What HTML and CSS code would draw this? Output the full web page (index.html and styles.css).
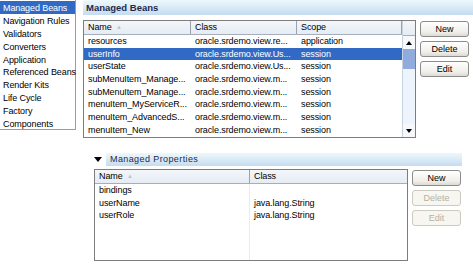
FILE: index.html
```html
<!DOCTYPE html>
<html lang="en">
<head>
    <meta charset="UTF-8">
    <meta name="viewport" content="width=device-width, initial-scale=1.0">
    <title>Managed Beans</title>
    <link rel="stylesheet" href="styles.css">
</head>
<body>
    <div class="top">
        <ul class="nav">
            <li class="selected">Managed Beans</li>
            <li>Navigation Rules</li>
            <li>Validators</li>
            <li>Converters</li>
            <li>Application</li>
            <li>Referenced Beans</li>
            <li>Render Kits</li>
            <li>Life Cycle</li>
            <li>Factory</li>
            <li>Components</li>
        </ul>

        <div class="beans">
            <div class="bar bold">Managed Beans</div>
            <div class="panel">
                <div class="grid beans-grid">
                    <div class="grid-main">
                        <div class="row head">
                            <span>Name <i class="sort">&#9650;</i></span>
                            <span>Class</span>
                            <span>Scope</span>
                        </div>
                        <div class="row"><span>resources</span><span>oracle.srdemo.view.re...</span><span>application</span></div>
                        <div class="row selected"><span>userInfo</span><span>oracle.srdemo.view.Us...</span><span>session</span></div>
                        <div class="row"><span>userState</span><span>oracle.srdemo.view.Us...</span><span>session</span></div>
                        <div class="row"><span>subMenuItem_Manage...</span><span>oracle.srdemo.view.m...</span><span>session</span></div>
                        <div class="row"><span>subMenuItem_Manage...</span><span>oracle.srdemo.view.m...</span><span>session</span></div>
                        <div class="row"><span>menuItem_MyServiceR...</span><span>oracle.srdemo.view.m...</span><span>session</span></div>
                        <div class="row"><span>menuItem_AdvancedS...</span><span>oracle.srdemo.view.m...</span><span>session</span></div>
                        <div class="row"><span>menuItem_New</span><span>oracle.srdemo.view.m...</span><span>session</span></div>
                    </div>
                    <div class="scroll">
                        <div class="scroll-corner"></div>
                        <div class="scroll-btn"><i class="arrow-up"></i></div>
                        <div class="scroll-track">
                            <div class="scroll-thumb"></div>
                        </div>
                        <div class="scroll-btn"><i class="arrow-down"></i></div>
                    </div>
                </div>
                <div class="buttons">
                    <button>New</button>
                    <button>Delete</button>
                    <button>Edit</button>
                </div>
            </div>
        </div>
    </div>

    <div class="props">
        <div class="props-head">
            <i class="toggle"></i>
            <div class="bar">Managed Properties</div>
        </div>
        <div class="panel">
            <div class="grid props-grid">
                <div class="row head">
                    <span>Name <i class="sort">&#9650;</i></span>
                    <span>Class</span>
                </div>
                <div class="row"><span>bindings</span><span></span></div>
                <div class="row"><span>userName</span><span>java.lang.String</span></div>
                <div class="row"><span>userRole</span><span>java.lang.String</span></div>
                <div class="row filler"><span></span><span></span></div>
            </div>
            <div class="buttons">
                <button>New</button>
                <button disabled>Delete</button>
                <button disabled>Edit</button>
            </div>
        </div>
    </div>
</body>
</html>
```

FILE: styles.css
```css
body {
    margin: 0;
    background: #fff;
    font-family: "Liberation Sans", Arial, sans-serif;
    font-size: 9px;
    letter-spacing: -0.1px;
    color: #000;
    width: 473px;
    height: 266px;
    overflow: hidden;
}

.top {
    display: flex;
    align-items: flex-start;
}

/* liste de gauche */
.nav {
    list-style: none;
    margin: 0;
    padding: 1px 0 0;
    width: 75px;
    height: 128px;
    border: 1px solid #9c9c9c;
    border-top: none;
    border-left: none;
}

.nav li {
    height: 12.9px;
    line-height: 14px;
    padding-left: 3px;
    white-space: nowrap;
}

.nav li.selected {
    background: #316ac5;
    color: #fff;
}

.beans {
    flex: 1;
    margin-left: 7px;
}

.bar {
    height: 15px;
    line-height: 15px;
    padding-left: 3px;
    background: linear-gradient(#eef8fc, #c5dcf0);
    color: #1b2b4d;
    white-space: nowrap;
}

.bar.bold {
    font-weight: bold;
    font-size: 9.5px;
    letter-spacing: 0;
}

.panel {
    display: flex;
    align-items: flex-start;
    margin-top: 5px;
}

.grid {
    border: 1px solid #7d7d7d;
    background: #fff;
}

.beans-grid {
    display: flex;
    width: 331px;
    height: 116px;
}

.grid-main {
    flex: 1;
}

.row {
    display: grid;
    height: 12.7px;
    line-height: 12.7px;
    white-space: nowrap;
}

.beans-grid .row {
    grid-template-columns: 107px 106px 1fr;
}

.props-grid .row {
    grid-template-columns: 155px 1fr;
}

.row span {
    padding-left: 4px;
    overflow: hidden;
}

.row.head {
    height: 13px;
    line-height: 13px;
    background: linear-gradient(#f3f6fa, #e6ecf4);
    border-bottom: 1px solid #a6aebb;
}

.row.head span {
    border-right: 1px solid #9ba3b0;
}

.row.head span:last-child {
    border-right: none;
}

.beans-grid .row.head span:last-child {
    border-right: 1px solid #9ba3b0;
}

.row.selected {
    background: #316ac5;
    color: #fff;
}

.sort {
    font-style: normal;
    font-size: 6px;
    color: #c0c4ca;
    vertical-align: 1px;
    margin-left: 2px;
}

/* barre de defilement */
.scroll {
    width: 12px;
    display: flex;
    flex-direction: column;
    background: #eef4fc;
    border-left: 1px solid #c8d3e2;
}

.scroll-corner {
    height: 14px;
    background: linear-gradient(#f3f6fa, #e6ecf4);
    border-bottom: 1px solid #a6aebb;
}

.scroll-btn {
    height: 13px;
    display: flex;
    align-items: center;
    justify-content: center;
    background: #f6f8fb;
}

.scroll-track {
    flex: 1;
}

.scroll-thumb {
    height: 20px;
    background-color: #c9d8f6;
    background-image: radial-gradient(#8ea8dc 0.7px, transparent 0.8px);
    background-size: 2px 2px;
}

.arrow-up,
.arrow-down {
    width: 0;
    height: 0;
    border-left: 3px solid transparent;
    border-right: 3px solid transparent;
}

.arrow-up {
    border-bottom: 4px solid #000;
}

.arrow-down {
    border-top: 4px solid #000;
}

/* boutons */
.buttons {
    display: flex;
    flex-direction: column;
    gap: 4px;
    margin-left: 4px;
    margin-top: 1px;
}

button {
    width: 49px;
    height: 16px;
    padding: 0;
    font-family: "Liberation Sans", Arial, sans-serif;
    font-size: 9px;
    color: #000;
    background: linear-gradient(#ffffff, #f0efea 70%, #dcdad2);
    border: 1px solid #8c8c8c;
    border-radius: 3px;
}

button:disabled {
    color: #b4b2a6;
    background: #f7f6f0;
    border-color: #cdcbbf;
}

/* proprietes */
.props {
    margin-left: 94px;
    margin-top: 15px;
}

.props-head {
    display: flex;
    align-items: center;
}

.toggle {
    width: 0;
    height: 0;
    margin-right: 4px;
    border-left: 4.5px solid transparent;
    border-right: 4.5px solid transparent;
    border-top: 5px solid #000;
}

.props-head .bar {
    width: 352px;
    height: 13px;
    line-height: 13px;
    letter-spacing: 0.4px;
    padding-left: 4px;
}

.props .panel {
    margin-top: 3px;
}

.props-grid {
    width: 312px;
    height: 90px;
    display: flex;
    flex-direction: column;
}

.props-grid .row.filler {
    flex: 1;
}

.props-grid .row span:first-child {
    border-right: 1px solid #ececec;
}

.props-grid .row.head span:first-child {
    border-right: 1px solid #9ba3b0;
}

.props .buttons {
    margin-top: 1px;
}
```
